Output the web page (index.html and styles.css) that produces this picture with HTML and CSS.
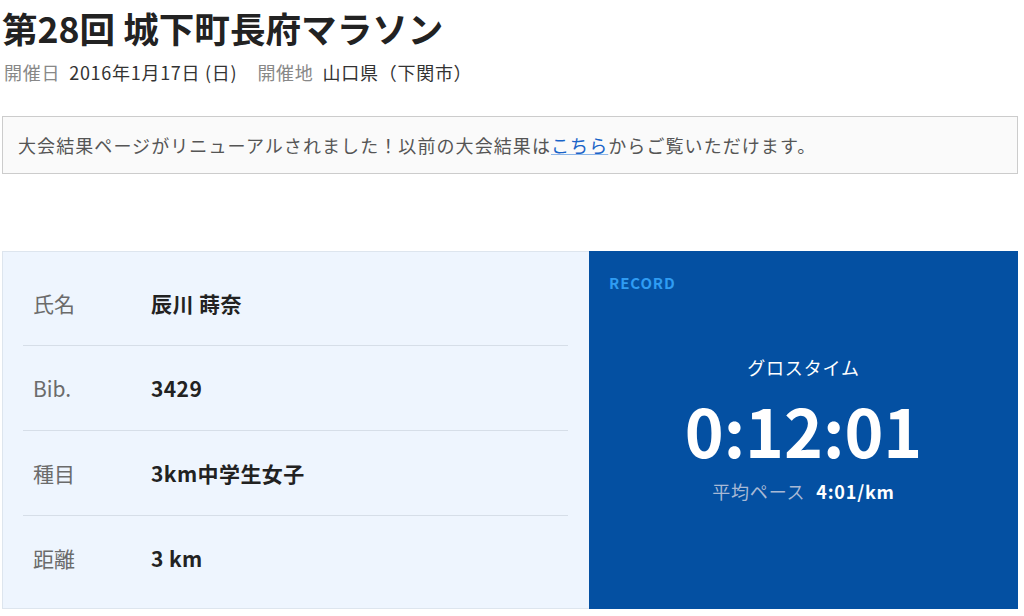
FILE: index.html
```html
<!DOCTYPE html>
<html lang="ja">
<head>
    <meta charset="UTF-8">
    <meta name="viewport" content="width=device-width, initial-scale=1.0">
    <title>第28回 城下町長府マラソン</title>
    <link rel="stylesheet" href="styles.css">
</head>
<body>
    <div class="page">
        <h1 class="title">第28回 城下町長府マラソン</h1>
        <div class="meta">
            <span class="meta-label">開催日</span>
            <span class="meta-value">2016年1月17日 (日)</span>
            <span class="meta-label">開催地</span>
            <span class="meta-value">山口県（下関市）</span>
        </div>

        <div class="notice">
            大会結果ページがリニューアルされました！以前の大会結果は<a href="#">こちら</a>からご覧いただけます。
        </div>

        <div class="result">
            <div class="profile">
                <div class="row">
                    <div class="row-label">氏名</div>
                    <div class="row-value">辰川 蒔奈</div>
                </div>
                <div class="row">
                    <div class="row-label">Bib.</div>
                    <div class="row-value">3429</div>
                </div>
                <div class="row">
                    <div class="row-label">種目</div>
                    <div class="row-value">3km中学生女子</div>
                </div>
                <div class="row">
                    <div class="row-label">距離</div>
                    <div class="row-value">3 km</div>
                </div>
            </div>
            <div class="record">
                <div class="record-tag">RECORD</div>
                <div class="record-body">
                    <div class="record-label">グロスタイム</div>
                    <div class="record-time">0:12:01</div>
                    <div class="record-pace">
                        <span class="pace-label">平均ペース</span>
                        <span class="pace-value">4:01/km</span>
                    </div>
                </div>
            </div>
        </div>
    </div>
</body>
</html>
```

FILE: styles.css
```css
body {
    margin: 0;
    font-family: "Noto Sans CJK JP", "Noto Sans", sans-serif;
    color: #222;
    background-color: #fff;
}
.page {
    width: 1016px;
    margin-left: 2px;
}
.title {
    margin: 0;
    padding-top: 5px;
    font-size: 35.6px;
    line-height: 46px;
    font-weight: bold;
    color: #222;
}
.meta {
    margin-top: 7px;
    padding-left: 2px;
    font-size: 18px;
    line-height: 28px;
    letter-spacing: 0.04em;
    display: flex;
}
.meta-label {
    color: #888;
    margin-right: 9px;
}
.meta-value {
    color: #333;
    margin-right: 20px;
}
.notice {
    margin-top: 30px;
    padding: 15px 15px;
    border: 1px solid #ccc;
    background-color: #fafafa;
    font-size: 18px;
    line-height: 26px;
    letter-spacing: 0.06em;
    color: #555;
}
.notice a {
    color: #1a64c8;
    text-decoration: underline;
    text-decoration-color: #8ab4e8;
}
.result {
    margin-top: 77px;
    display: grid;
    grid-template-columns: 1fr 429px;
}
.profile {
    background-color: #eef5fe;
    border: 1px solid #dde5ee;
    border-right: none;
    padding: 9px 21px 8px 20px;
}
.row {
    display: flex;
    align-items: center;
    height: 84px;
    border-bottom: 1px solid #d6dee8;
    padding-left: 10px;
}
.row:last-child {
    border-bottom: none;
}
.row-label {
    width: 118px;
    font-size: 21px;
    color: #6b6b6b;
}
.row-value {
    font-size: 21px;
    font-weight: bold;
    letter-spacing: 0.02em;
    color: #222;
}
.record {
    background-color: #0450a2;
    padding: 22px 20px 20px 20px;
    color: #fff;
}
.record-tag {
    font-size: 15px;
    line-height: 20px;
    font-weight: bold;
    letter-spacing: 0.06em;
    color: #2f9cf3;
}
.record-body {
    margin-top: 62px;
    text-align: center;
    letter-spacing: 0.05em;
}
.record-label {
    font-size: 18px;
    line-height: 24px;
}
.record-time {
    margin-top: 17px;
    font-size: 66px;
    line-height: 66px;
    font-weight: bold;
    letter-spacing: 0;
}
.record-pace {
    margin-top: 17px;
    font-size: 18px;
    line-height: 24px;
}
.pace-label {
    color: #a8b9d5;
    margin-right: 6px;
}
.pace-value {
    font-weight: bold;
}
```
